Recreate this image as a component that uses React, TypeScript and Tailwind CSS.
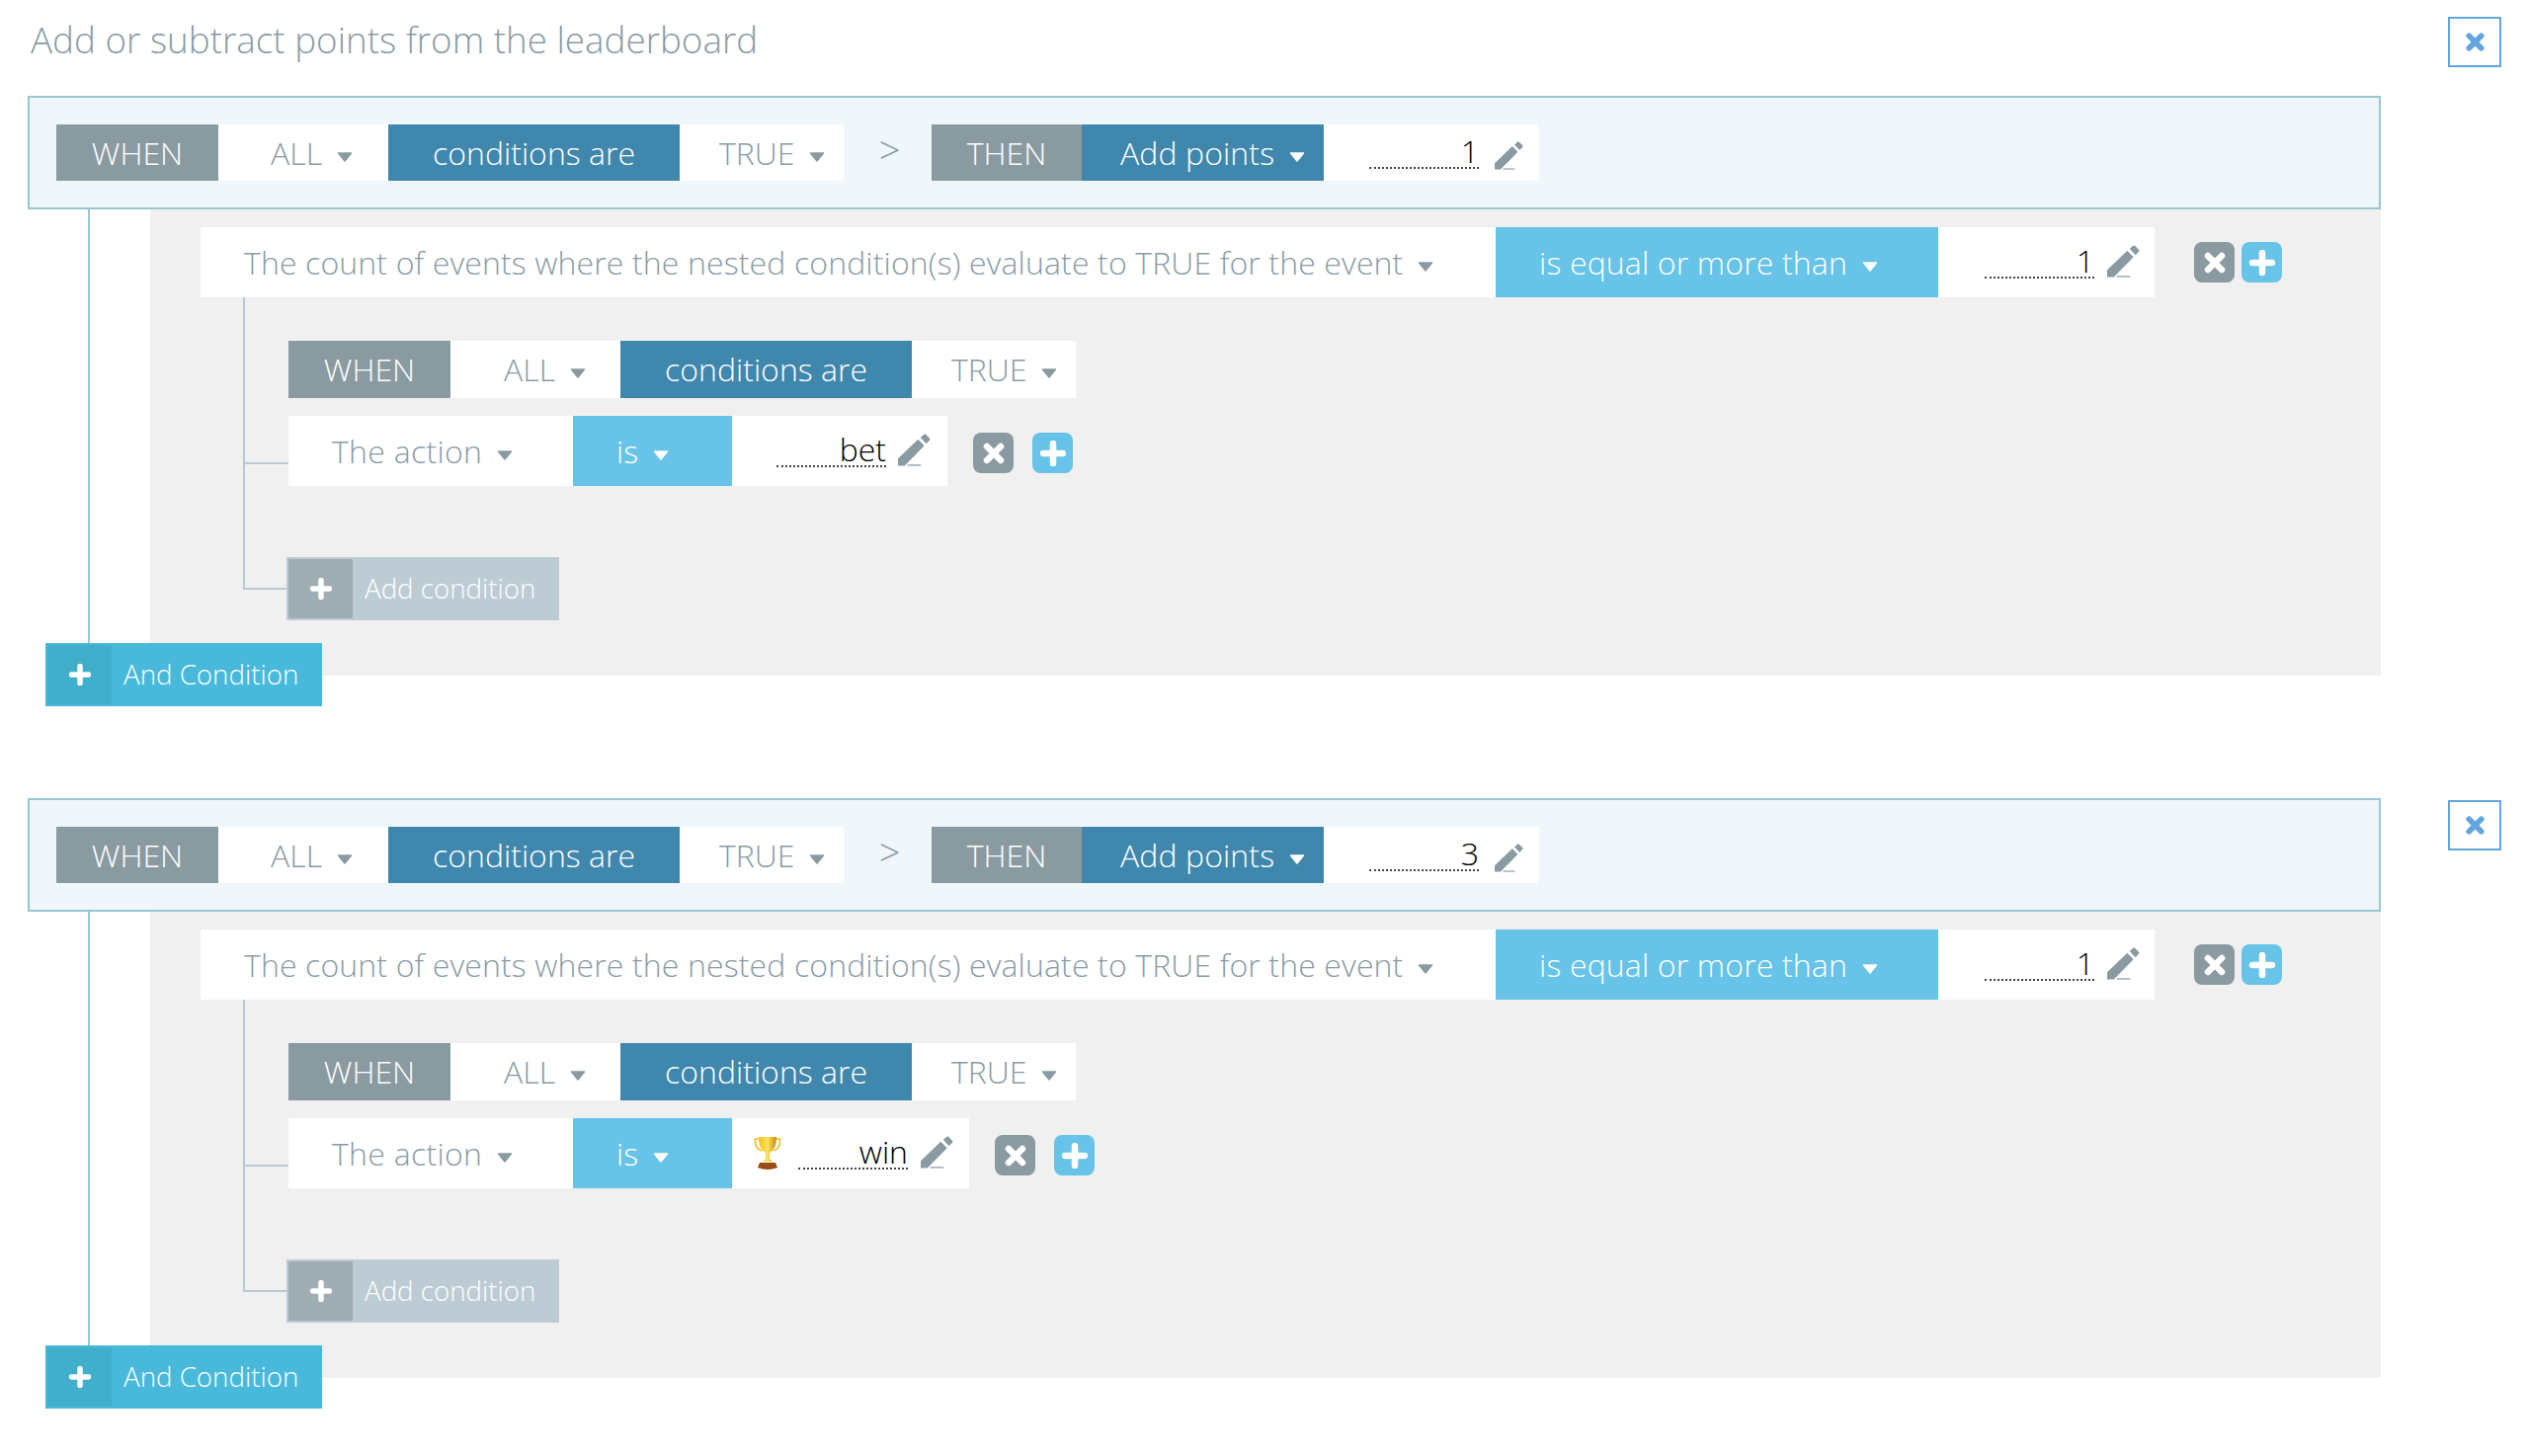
const font = '"Open Sans", "Noto Sans", sans-serif';

function Caret({ white }: { white?: boolean }) {
  return (
    <svg width="16" height="10" viewBox="0 0 16 10" className="ml-[15px] mt-[8px] shrink-0">
      <path d="M1.5 1 H14.5 L8 9 Z" fill={white ? '#fff' : '#8a9aa1'} stroke={white ? '#fff' : '#8a9aa1'} strokeWidth="1.5" strokeLinejoin="round" />
    </svg>
  );
}

function Pencil({ className, size = 33 }: { className?: string; size?: number }) {
  return (
    <svg width={size} height={size} viewBox="0 0 34 34" className={className}>
      <path d="M0 26 L21 6 L27.5 12.5 L7 33.5 H0 Z" fill="#8a9aa1" />
      <path d="M23.5 4 L27 0.8 Q28 0 29 0.8 L33 4.8 Q34 6 33 7 L29.5 10.5 Z" fill="#8a9aa1" />
      <rect x="10" y="32" width="14" height="1.8" fill="#a9b6bc" />
    </svg>
  );
}

function CrossIcon({ color = '#fff', size = 26 }: { color?: string; size?: number }) {
  return (
    <svg width={size} height={size} viewBox="0 0 26 26">
      <path d="M6 6 L20 20 M20 6 L6 20" stroke={color} strokeWidth="6.5" strokeLinecap="round" />
    </svg>
  );
}

function PlusIcon({ size = 26 }: { size?: number }) {
  return (
    <svg width={size} height={size} viewBox="0 0 26 26">
      <path d="M3 13 H23 M13 3 V23" stroke="#fff" strokeWidth="6.5" strokeLinecap="round" />
    </svg>
  );
}

function Trophy() {
  return (
    <svg width="28" height="35" viewBox="0 0 28 35" className="shrink-0">
      <defs>
        <linearGradient id="cup" x1="0" x2="1">
          <stop offset="0" stopColor="#f6c21c" />
          <stop offset="0.5" stopColor="#fbe25a" />
          <stop offset="1" stopColor="#c88a0c" />
        </linearGradient>
      </defs>
      <path d="M5 3 H1.5 C1 10 4 14 8 15 M23 3 H26.5 C27 10 24 14 20 15" fill="none" stroke="#eebc2a" strokeWidth="1.6" />
      <path d="M5 1 H23 C23 10 20 15 16 17 V23 L19 26 H9 L12 23 V17 C8 15 5 10 5 1 Z" fill="url(#cup)" />
      <path d="M6 27 H22 L24 32 Q14 36 4 32 Z" fill="#9a4a14" />
    </svg>
  );
}

type TagProps = {
  label: string;
  w: string;
  tone: 'gray' | 'dark' | 'light' | 'white';
  h?: string;
  caret?: boolean;
  pl?: string;
  extra?: string;
};

function Tag({ label, w, tone, h = 'h-[57px]', caret, pl, extra }: TagProps) {
  const tones = {
    gray: 'bg-[#8a9aa1] text-white',
    dark: 'bg-[#3f87ac] text-white',
    light: 'bg-[#67c3e7] text-white',
    white: 'bg-white text-[#8a9ba5]',
  };
  return (
    <div className={`${w} ${h} ${tones[tone]} ${pl ?? 'justify-center'} flex items-center shrink-0 whitespace-nowrap`}>
      <span className={extra}>{label}</span>
      {caret && <Caret white={tone !== 'white'} />}
    </div>
  );
}

function Value({ value, w, h, trophy, lead, gap, size, lift }: { value: string; w: string; h: string; trophy?: boolean; lead?: string; gap: string; size: number; lift: string }) {
  return (
    <div className={`${w} ${h} bg-white flex items-center shrink-0`}>
      {trophy ? (
        <div className="ml-[22px] mr-[17px] flex"><Trophy /></div>
      ) : (
        <div className={lead} />
      )}
      <div className={`w-[111px] h-[35px] border-b-2 border-dotted border-[#444] text-black text-right leading-[33px] ${lift}`}>{value}</div>
      <Pencil className={gap} size={size} />
    </div>
  );
}

function WhenRow({ h, allPl }: { h: string; allPl: string }) {
  return (
    <div className="flex">
      <Tag label="WHEN" w="w-[164px]" h={h} tone="gray" />
      <Tag label="ALL" w="w-[172px]" h={h} tone="white" caret pl={allPl} />
      <Tag label="conditions are" w="w-[295px]" h={h} tone="dark" />
      <Tag label="TRUE" w="w-[166px]" h={h} tone="white" caret pl="pl-[40px]" />
    </div>
  );
}

function IconButtons({ gap }: { gap: string }) {
  return (
    <div className={`flex ${gap}`}>
      <div className="w-[41px] h-[41px] rounded-[8px] bg-[#8a9aa1] flex items-center justify-center"><CrossIcon /></div>
      <div className="w-[41px] h-[41px] rounded-[8px] bg-[#67c3e7] flex items-center justify-center"><PlusIcon /></div>
    </div>
  );
}

function Rule({ points, action, trophy }: { points: string; action: string; trophy?: boolean }) {
  return (
    <div className="relative w-[2382px]">
      <div className="absolute left-[61px] top-[115px] bottom-[50px] w-[2px] bg-[#98c6d1]" />
      <div className="h-[115px] border-2 border-[#98c6d1] bg-[#eff7fa] pl-[27px] pt-[27px] flex">
        <WhenRow h="h-[57px]" allPl="pl-[53px]" />
        <div className="w-[89px] h-[57px] pl-[4px] flex items-center justify-center text-[38px] text-[#8a9ba5] mt-[-3px]">&gt;</div>
        <Tag label="THEN" w="w-[152px]" tone="gray" />
        <Tag label="Add points" w="w-[245px]" tone="dark" caret pl="pl-[39px]" extra="tracking-[0.1px]" />
        <Value value={points} w="w-[218px]" h="h-[57px]" lead="w-[46px]" gap="ml-[16px] mt-[6px]" size={29} lift="mt-[-3px]" />
      </div>
      <div className="ml-[124px] bg-[#f0f0f0] pt-[18px] h-[472px]">
        <div className="flex items-center ml-[51px]">
          <Tag label="The count of events where the nested condition(s) evaluate to TRUE for the event" w="w-[1311px]" h="h-[71px]" tone="white" caret pl="pl-[44px]" extra="tracking-[0.13px]" />
          <Tag label="is equal or more than" w="w-[448px]" h="h-[71px]" tone="light" caret pl="pl-[44px]" extra="tracking-[0.15px]" />
          <Value value="1" w="w-[219px]" h="h-[71px]" lead="w-[47px]" gap="ml-[13px] mt-[-2px]" size={33} lift="mt-[-3px]" />
          <div className="ml-[40px]"><IconButtons gap="gap-[7px]" /></div>
        </div>
        <div className="relative ml-[94px] border-l-2 border-[#bdc9d2] h-[296px] pl-[44px] pt-[44px]">
          <div className="absolute left-0 top-[167px] w-[44px] h-[2px] bg-[#bdc9d2]" />
          <div className="absolute left-0 top-[294px] w-[44px] h-[2px] bg-[#bdc9d2]" />
          <WhenRow h="h-[58px]" allPl="pl-[54px]" />
          <div className="flex items-center mt-[18px]">
            <Tag label="The action" w="w-[288px]" h="h-[71px]" tone="white" caret pl="pl-[44px]" extra="tracking-[0.3px]" />
            <Tag label="is" w="w-[161px]" h="h-[71px]" tone="light" caret pl="pl-[44px]" />
            {trophy ? (
              <Value value={action} w="w-[240px]" h="h-[71px]" trophy gap="ml-[13px] mt-[-2px]" size={33} lift="mt-[-3px]" />
            ) : (
              <Value value={action} w="w-[218px]" h="h-[71px]" lead="w-[45px]" gap="ml-[12px] mt-[-2px]" size={33} lift="mt-[-3px]" />
            )}
            <div className="ml-[26px] mt-[4px]"><IconButtons gap="gap-[19px]" /></div>
          </div>
          <div className="mt-[72px] ml-[-2px] w-[276px] h-[64px] bg-[#bdccd4] border-2 border-[#bdccd4] flex text-[27.7px] text-white">
            <div className="w-[65px] h-[60px] bg-[#a0adb3] flex items-center justify-center"><PlusIcon size={22} /></div>
            <div className="flex items-center ml-[12px]">Add condition</div>
          </div>
        </div>
      </div>
      <div className="relative mt-[-33px] ml-[18px] w-[280px] h-[64px] bg-[#48b9da] border-2 border-[#48b9da] flex text-[27.7px] text-white">
        <div className="w-[65px] h-[60px] bg-[#41afcc] flex items-center justify-center"><PlusIcon size={22} /></div>
        <div className="flex items-center ml-[12px]">And Condition</div>
      </div>
    </div>
  );
}

function CloseBox({ className }: { className: string }) {
  return (
    <div className={`absolute left-[2478px] w-[54px] h-[51px] border-2 border-[#62a5e0] bg-white flex items-center justify-center ${className}`}>
      <CrossIcon color="#62a5e0" size={23} />
    </div>
  );
}

export default function App() {
  return (
    <div className="relative w-[2558px] h-[1474px] bg-white pl-[28px] font-light text-[32px] overflow-hidden" style={{ fontFamily: font }}>
      <CloseBox className="top-[17px]" />
      <CloseBox className="top-[810px]" />
      <div className="h-[97px] pl-[3px] pt-[15px] text-[36.8px] leading-[50px] text-[#8a9ba5]">Add or subtract points from the leaderboard</div>
      <Rule points="1" action="bet" />
      <div className="mt-[93px]">
        <Rule points="3" action="win" trophy />
      </div>
    </div>
  );
}
